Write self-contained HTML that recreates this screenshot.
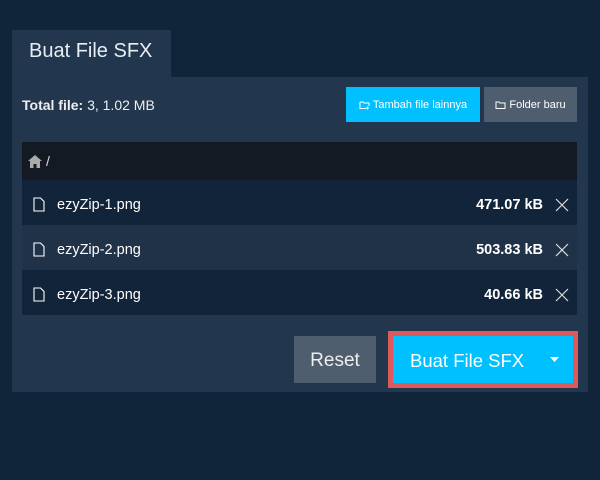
<!DOCTYPE html>
<html><head><style>
*{margin:0;padding:0;box-sizing:border-box}
body{width:600px;height:480px;background:#10243a;font-family:"Liberation Sans",sans-serif;color:#fff;position:relative;overflow:hidden}
.a{position:absolute}
.tab{left:12px;top:30px;width:159px;height:47px;background:#22374d;font-size:20px;color:#e8eef3;padding:10px 0 0 17px}
.panel{left:12px;top:77px;width:576px;height:315px;background:#22374d}
.total{left:22px;top:97px;font-size:14px;color:#eee}
.btn{top:87px;height:35px;font-size:11px;display:flex;align-items:center;justify-content:center;gap:3px}
.row{left:22px;width:555px;height:45px;font-size:14.5px;display:flex;align-items:center;padding-top:4px}
.row .n{margin-left:12px}
.row .s{margin-left:auto;margin-right:12px}
.row .x{margin-right:8px;width:14px;height:14px}
</style></head><body>
<div class="a tab">Buat File SFX</div>
<div class="a panel"></div>
<div class="a total"><b>Total file:</b> 3, 1.02 MB</div>
<div class="a btn" style="left:346px;width:134px;background:#00c0ff">
<svg width="11" height="10" viewBox="0 0 11 10" fill="none" stroke="#fff" stroke-width="1"><path d="M1 2V8.5H7M1 2H4L5 3H10V6M8.5 6.5V9.5M7 8H10"/></svg>Tambah file lainnya</div>
<div class="a btn" style="left:484px;width:93px;background:#4f5e6e">
<svg width="11" height="10" viewBox="0 0 11 10" fill="none" stroke="#fff" stroke-width="1"><path d="M1 2V8.5H10V3H5L4 2Z"/></svg>Folder baru</div>
<div class="a" style="left:22px;top:142px;width:555px;height:38px;background:#131a24"></div>
<svg class="a" style="left:28px;top:155px" width="14" height="13" viewBox="0 0 14 13"><path d="M7 0L0 6H2V13H5.5V9H8.5V13H12V6H14Z" fill="#aaa"/></svg>
<div class="a" style="left:46px;top:153px;font-size:14px;color:#ddd">/</div>
<div class="a row" style="top:180px;background:#12243a">
<svg style="margin-left:11px" width="12" height="15" viewBox="0 0 12 15" fill="none" stroke="#fff" stroke-width="1.1"><path d="M1 1H7.5L11 4.5V14H1Z"/></svg><span class="n">ezyZip-1.png</span><b class="s" style="font-weight:600">471.07 kB</b><svg class="x" viewBox="0 0 14 14" stroke="#ddd" stroke-width="1.2"><path d="M1 1L13 13M13 1L1 13"/></svg></div>
<div class="a row" style="top:225px;background:#1f3247">
<svg style="margin-left:11px" width="12" height="15" viewBox="0 0 12 15" fill="none" stroke="#fff" stroke-width="1.1"><path d="M1 1H7.5L11 4.5V14H1Z"/></svg><span class="n">ezyZip-2.png</span><b class="s" style="font-weight:600">503.83 kB</b><svg class="x" viewBox="0 0 14 14" stroke="#ddd" stroke-width="1.2"><path d="M1 1L13 13M13 1L1 13"/></svg></div>
<div class="a row" style="top:270px;background:#12243a">
<svg style="margin-left:11px" width="12" height="15" viewBox="0 0 12 15" fill="none" stroke="#fff" stroke-width="1.1"><path d="M1 1H7.5L11 4.5V14H1Z"/></svg><span class="n">ezyZip-3.png</span><b class="s" style="font-weight:600">40.66 kB</b><svg class="x" viewBox="0 0 14 14" stroke="#ddd" stroke-width="1.2"><path d="M1 1L13 13M13 1L1 13"/></svg></div>
<div class="a" style="left:294px;top:336px;width:82px;height:47px;background:#4f5e6e;font-size:19px;display:flex;align-items:center;justify-content:center;color:#eee;padding-top:3px">Reset</div>
<div class="a" style="left:388px;top:331px;width:190px;height:57px;background:#dd5a5a;padding:5px">
<div style="width:180px;height:47px;background:#00c0ff;font-size:18.5px;display:flex;align-items:center;padding-left:17px;padding-top:3px;position:relative">Buat File SFX
<svg style="position:absolute;right:14px;top:21px" width="9" height="5" viewBox="0 0 9 5"><path d="M0 0H9L4.5 5Z" fill="#fff"/></svg></div></div>
</body></html>
